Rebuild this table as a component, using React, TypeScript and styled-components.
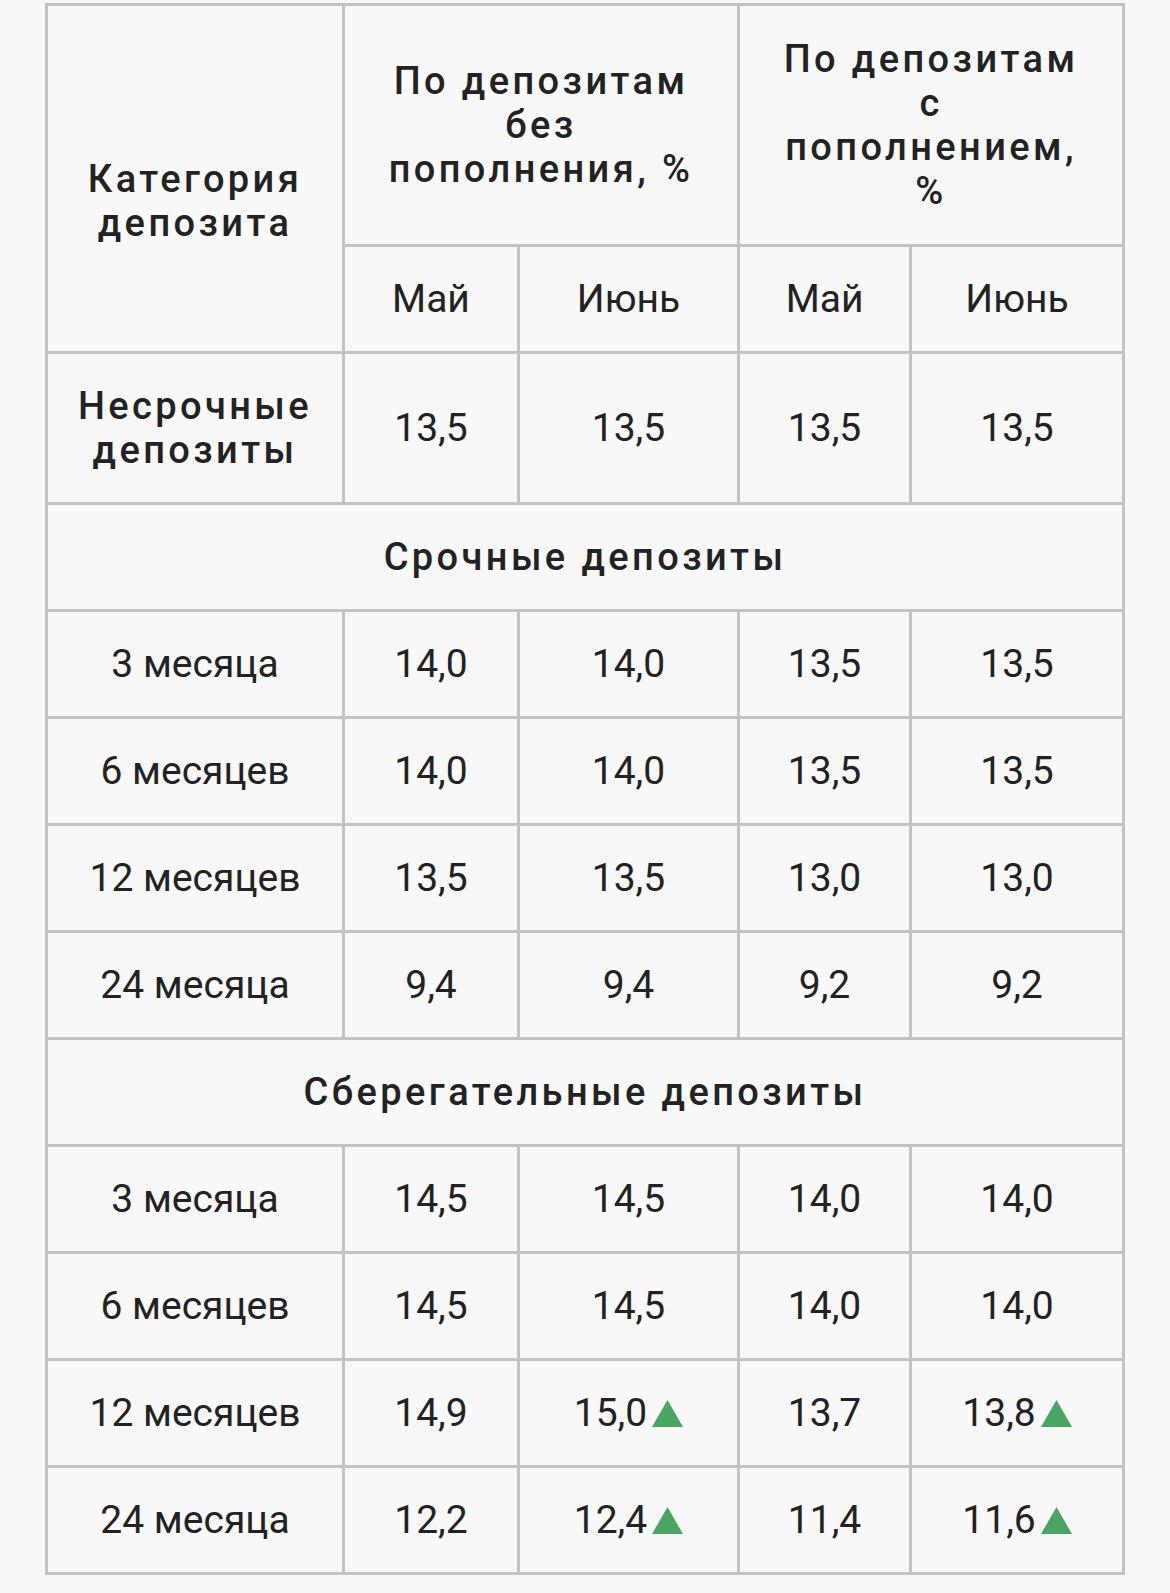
import styled, { createGlobalStyle } from 'styled-components'

const GlobalStyle = createGlobalStyle`
    body {
        margin: 0;
        background: #f8f8f8;
        font-family: Roboto, "Noto Sans", "Liberation Sans", sans-serif;
        color: #222222;
    }
`

type Value = { v: string; up?: boolean };

interface IRow {
    title: string;
    values: Value[];
}

const term: IRow[] = [
    { title: '3 месяца', values: [{ v: '14,0' }, { v: '14,0' }, { v: '13,5' }, { v: '13,5' }] },
    { title: '6 месяцев', values: [{ v: '14,0' }, { v: '14,0' }, { v: '13,5' }, { v: '13,5' }] },
    { title: '12 месяцев', values: [{ v: '13,5' }, { v: '13,5' }, { v: '13,0' }, { v: '13,0' }] },
    { title: '24 месяца', values: [{ v: '9,4' }, { v: '9,4' }, { v: '9,2' }, { v: '9,2' }] },
];

const savings: IRow[] = [
    { title: '3 месяца', values: [{ v: '14,5' }, { v: '14,5' }, { v: '14,0' }, { v: '14,0' }] },
    { title: '6 месяцев', values: [{ v: '14,5' }, { v: '14,5' }, { v: '14,0' }, { v: '14,0' }] },
    { title: '12 месяцев', values: [{ v: '14,9' }, { v: '15,0', up: true }, { v: '13,7' }, { v: '13,8', up: true }] },
    { title: '24 месяца', values: [{ v: '12,2' }, { v: '12,4', up: true }, { v: '11,4' }, { v: '11,6', up: true }] },
];

function UpMark() {
    return (
        <Triangle viewBox="0 0 31 27" width="31" height="27">
            <polygon points="15.5,0 31,27 0,27" fill="#4aa462" />
        </Triangle>
    );
}

function DataRow({ title, values }: IRow) {
    return (
        <tr>
            <Cell>{title}</Cell>
            {values.map((item, i) => (
                <Cell key={i}>
                    {item.v}
                    {item.up && <UpMark />}
                </Cell>
            ))}
        </tr>
    );
}

function App() {
    return (
        <>
            <GlobalStyle />
            <Page>
                <Table>
                    <colgroup>
                        <col style={{ width: 297 }} />
                        <col style={{ width: 175 }} />
                        <col style={{ width: 220 }} />
                        <col style={{ width: 172 }} />
                        <col style={{ width: 213 }} />
                    </colgroup>
                    <thead>
                        <tr>
                            <HeadCell rowSpan={2} $pad="75px 8px 30px">
                                Категория<br />депозита
                            </HeadCell>
                            <HeadCell colSpan={2} $pad="31px 8px">
                                По депозитам<br />без<br />пополнения, %
                            </HeadCell>
                            <HeadCell colSpan={2} $pad="31px 8px">
                                По депозитам<br />с<br />пополнением,<br />%
                            </HeadCell>
                        </tr>
                        <tr>
                            <Cell as="th">Май</Cell>
                            <Cell as="th">Июнь</Cell>
                            <Cell as="th">Май</Cell>
                            <Cell as="th">Июнь</Cell>
                        </tr>
                    </thead>
                    <tbody>
                        <tr>
                            <HeadCell>Несрочные<br />депозиты</HeadCell>
                            <Cell>13,5</Cell>
                            <Cell>13,5</Cell>
                            <Cell>13,5</Cell>
                            <Cell>13,5</Cell>
                        </tr>
                        <tr>
                            <HeadCell colSpan={5}>Срочные депозиты</HeadCell>
                        </tr>
                        {term.map((row, i) => <DataRow key={i} {...row} />)}
                        <tr>
                            <HeadCell colSpan={5}>Сберегательные депозиты</HeadCell>
                        </tr>
                        {savings.map((row, i) => <DataRow key={i} {...row} />)}
                    </tbody>
                </Table>
            </Page>
        </>
    );
}

const Page = styled.div`
    padding: 3px 45px 17px;
`

const Table = styled.table`
    width: 1080px;
    table-layout: fixed;
    border-collapse: separate;
    border-spacing: 0;
    border-top: 3px solid #c3c3c3;
    border-left: 3px solid #c3c3c3;
    background: #f8f8f8;
`

const Cell = styled.td`
    box-sizing: border-box;
    border-right: 3px solid #c3c3c3;
    border-bottom: 3px solid #c3c3c3;
    padding: 30px 8px;
    text-align: center;
    vertical-align: middle;
    font-size: 39px;
    font-weight: 400;
    line-height: 44px;
    color: #222222;
    white-space: nowrap;
`

interface IHeadProps {
    $pad?: string;
}

const HeadCell = styled.th<IHeadProps>`
    box-sizing: border-box;
    border-right: 3px solid #c3c3c3;
    border-bottom: 3px solid #c3c3c3;
    padding: ${props => props.$pad || '30px 8px'};
    text-align: center;
    vertical-align: middle;
    font-size: 38px;
    font-weight: 500;
    line-height: 44px;
    letter-spacing: 3.4px;
    color: #222222;
`

const Triangle = styled.svg`
    display: inline-block;
    vertical-align: baseline;
    margin-left: 5px;
    margin-bottom: -1px;
`

export default App;
